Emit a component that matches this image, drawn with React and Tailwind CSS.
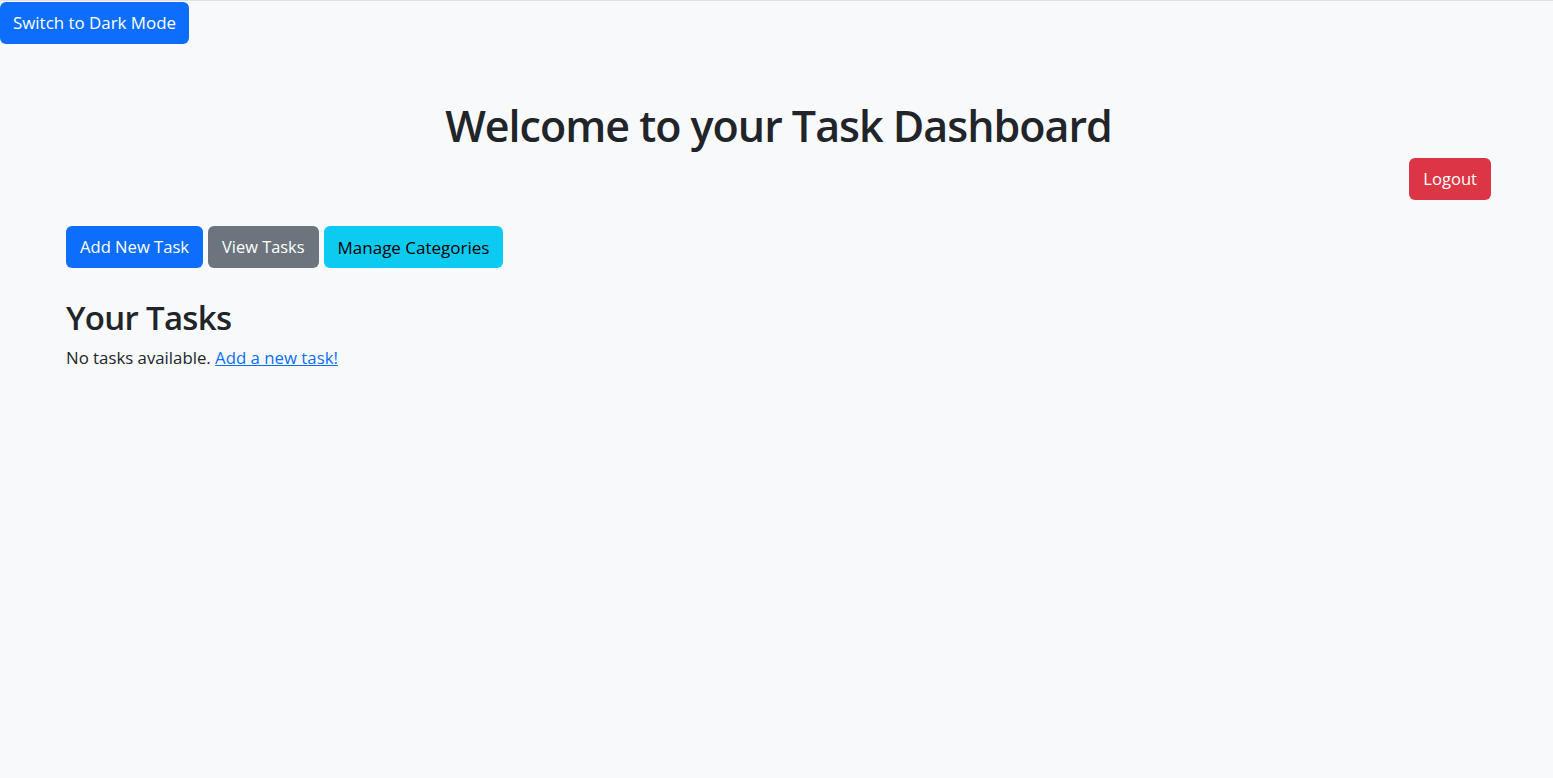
const App = () => {
  const btn = "inline-flex items-center h-[42px] rounded-[6px] leading-none";

  return (
    <div
      className="min-h-screen bg-[#f8f9fa] border-t border-[#dee2e6] text-[#212529]"
      style={{ fontFamily: '"Open Sans", "Noto Sans", sans-serif' }}
    >
      <div className="pt-px">
        <button className={`${btn} px-[13px] text-[16.9px] bg-[#0d6efd] text-white`}>Switch to Dark Mode</button>
      </div>

      <div className="pl-[66px] pr-[62px]">
        <h1 className="mt-[52px] text-center text-[43px] font-semibold tracking-[-1px] leading-[60px]">
          Welcome to your Task Dashboard
        </h1>

        <div className="flex justify-end mt-[2px]">
          <button className={`${btn} px-[14px] text-[16.6px] bg-[#dc3545] text-white`}>Logout</button>
        </div>

        <div className="flex gap-[5px] mt-[26px]">
          <button className={`${btn} px-[14px] text-[16.6px] bg-[#0d6efd] text-white`}>Add New Task</button>
          <button className={`${btn} px-[14px] text-[16.4px] bg-[#6c757d] text-white`}>View Tasks</button>
          <button className={`${btn} px-[14px] text-[17px] bg-[#0dcaf0] text-black`}>Manage Categories</button>
        </div>

        <h2 className="mt-[28px] text-[33px] font-semibold tracking-[-0.7px] leading-[44px]">Your Tasks</h2>
        <p className="mt-[5px] text-[16.8px] leading-[26px]">
          No tasks available.{" "}
          <a href="#" className="text-[#0d6efd] underline">
            Add a new task!
          </a>
        </p>
      </div>
    </div>
  );
};

export default App;
